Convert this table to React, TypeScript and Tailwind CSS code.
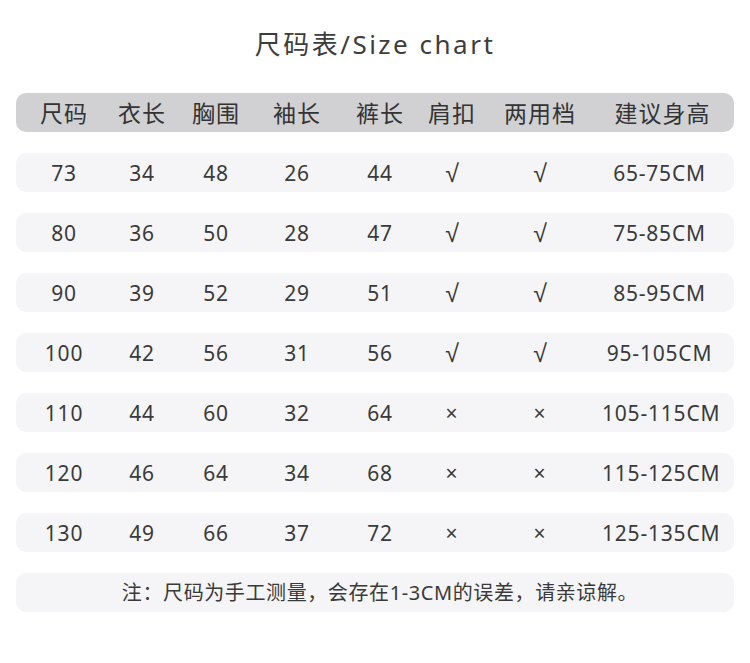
import React from "react";

const rows = [
  ["73", "34", "48", "26", "44", "√", "√", "65-75CM"],
  ["80", "36", "50", "28", "47", "√", "√", "75-85CM"],
  ["90", "39", "52", "29", "51", "√", "√", "85-95CM"],
  ["100", "42", "56", "31", "56", "√", "√", "95-105CM"],
  ["110", "44", "60", "32", "64", "×", "×", "105-115CM"],
  ["120", "46", "64", "34", "68", "×", "×", "115-125CM"],
  ["130", "49", "66", "37", "72", "×", "×", "125-135CM"],
];
const head = ["尺码", "衣长", "胸围", "袖长", "裤长", "肩扣", "两用档", "建议身高"];
const grid = "grid grid-cols-[96px_60px_88px_74px_92px_52px_124px_115px] items-center";
const font = { fontFamily: '"Noto Sans", "Noto Sans CJK SC", sans-serif' };
const cjk = { fontFamily: '"Noto Sans CJK SC", sans-serif' };
const check = { fontFamily: '"Liberation Sans", sans-serif' };

export default function App() {
  return (
    <div className="w-[750px] h-[663px] bg-white text-[#333]" style={font}>
      <div className="pt-[27px] h-[93px] text-center text-[26px] tracking-[2.5px] text-[#3d3d3d] leading-[34px]">
        尺码表/Size chart
      </div>
      <div className="mx-[16px] flex flex-col">
        <div className={`${grid} h-[39px] rounded-[10px] bg-[#d1d1d3] text-[23px] tracking-[1px] text-[#333]`} style={cjk}>
          {head.map((h, i) => (
            <div key={h} className={`text-center whitespace-nowrap ${i === 7 ? "pl-[6px]" : ""}`}>{h}</div>
          ))}
        </div>
        <div className="flex flex-col gap-[21px] mt-[21px]">
          {rows.map((r) => (
            <div key={r[0]} className={`${grid} h-[39px] rounded-[10px] bg-[#f5f5f7] text-[21px] text-[#3a3a3a]`}>
              {r.map((c, i) =>
                c === "√" ? (
                  <div key={i} className="text-center text-[25px] leading-[30px]" style={check}>{c}</div>
                ) : (
                  <div key={i} className="text-center whitespace-nowrap tracking-[0.8px] leading-[30px]">{c}</div>
                )
              )}
            </div>
          ))}
          <div className="h-[39px] rounded-[10px] bg-[#f5f5f7] flex items-center justify-center pl-[10px] text-[20px] tracking-[0.6px] text-[#3a3a3a] whitespace-nowrap">
            注：尺码为手工测量，会存在1-3CM的误差，请亲谅解。
          </div>
        </div>
      </div>
    </div>
  );
}
